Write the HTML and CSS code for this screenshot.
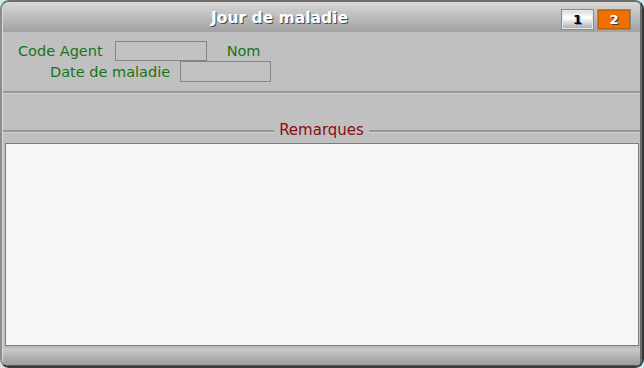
FILE: index.html
```html
<!DOCTYPE html>
<html lang="fr">
<head>
<meta charset="utf-8">
<title>Jour de maladie</title>
<link rel="stylesheet" href="styles.css">
</head>
<body>
<div class="window">
  <div class="inner">
    <div class="header">
      <div class="title">Jour de maladie</div>
      <div class="tabs">
        <div class="tab tab-off">1</div>
        <div class="tab tab-on">2</div>
      </div>
    </div>
    <div class="form">
      <div class="row row1">
        <span class="label">Code Agent</span>
        <span class="field field-code"></span>
        <span class="label label-nom">Nom</span>
      </div>
      <div class="row row2">
        <span class="label">Date de maladie</span>
        <span class="field field-date"></span>
      </div>
    </div>
    <div class="sep"></div>
    <div class="section">
      <span class="line"></span>
      <span class="section-title">Remarques</span>
      <span class="line"></span>
    </div>
    <div class="memo"></div>
    <div class="footer"></div>
  </div>
</div>
</body>
</html>
```
FILE: styles.css
```css
html, body {
  margin: 0;
  padding: 0;
}
body {
  background: #d3e9e9;
  width: 644px;
  height: 368px;
  overflow: hidden;
  font-family: "DejaVu Sans", Verdana, sans-serif;
}
.window {
  box-sizing: border-box;
  width: 644px;
  height: 368px;
  border-style: solid;
  border-width: 2px 2px 2px 2px;
  border-color: #6c6c6c #3a3a3a #3a3a3a #8c8c8c;
  border-radius: 9px;
  overflow: hidden;
  background: #c0c0c0;
}
.inner {
  box-sizing: border-box;
  height: 100%;
  display: flex;
  flex-direction: column;
  border-left: 1px solid #dadada;
  border-right: 2px solid #6a6a6a;
}
.header {
  height: 30px;
  flex: none;
  display: flex;
  align-items: flex-start;
  background: linear-gradient(to bottom, #d8d8d8 0%, #c4c4c4 35%, #a2a2a2 100%);
}
.title {
  flex: 1;
  text-align: center;
  color: #ffffff;
  font-weight: bold;
  font-size: 15.5px;
  line-height: 18px;
  padding-top: 7px;
  text-shadow: 1px 1px 0 #4a4a4a;
}
.tabs {
  display: flex;
  gap: 3px;
  padding: 7px 9px 0 5px;
}
.tab {
  box-sizing: border-box;
  width: 33px;
  height: 21px;
  font-size: 13px;
  font-weight: bold;
  line-height: 19px;
  text-align: center;
  border: 1px solid #8a8a8a;
}
.tab-off {
  color: #000000;
  background: linear-gradient(to bottom, #d8d8d8 0%, #ffffff 40%, #e4e4e4 60%, #a8a8a8 100%);
  text-shadow: 1px 1px 0 #6c8cc0;
  box-shadow: inset 0 0 0 1px #e8e8e8;
}
.tab-on {
  width: 34px;
  color: #ffffff;
  background: #ee7000;
  text-shadow: 1px 1px 0 #404040;
  box-shadow: inset 0 0 0 1px #c86000;
}
.form {
  padding-top: 9px;
  font-size: 14.5px;
  color: #167416;
}
.row {
  display: flex;
  align-items: center;
}
.row1 {
  height: 20px;
  padding-left: 15px;
}
.row2 {
  height: 21px;
  padding-left: 47px;
}
.label {
  line-height: 18px;
}
.field {
  box-sizing: border-box;
  display: block;
  border: 1px solid #858585;
  background: #c2c2c2;
  margin-left: 10px;
}
.field-code {
  width: 92px;
  height: 20px;
  margin-left: 12px;
}
.field-date {
  width: 91px;
  height: 21px;
}
.label-nom {
  margin-left: 20px;
}
.sep {
  margin-top: 9px;
  height: 2px;
  background: #979797;
  border-bottom: 1px solid #d2d2d2;
  flex: none;
}
.section {
  margin-top: 27px;
  height: 18px;
  flex: none;
  display: flex;
  align-items: center;
  gap: 5px;
}
.line {
  flex: 1;
  height: 2px;
  background: #979797;
  border-bottom: 1px solid #d2d2d2;
  margin-top: 3px;
}
.section-title {
  color: #8a0c14;
  font-size: 15px;
  line-height: 18px;
}
.memo {
  box-sizing: border-box;
  margin: 4px 1px 0 2px;
  height: 203px;
  flex: none;
  background: #f6f6f6;
  border: 1px solid #7c7c7c;
}
.footer {
  flex: 1;
  background: linear-gradient(to bottom, #b9b9b9 0%, #c8c8c8 20%, #b4b4b4 55%, #9c9c9c 100%);
  border-bottom: 1px solid #555555;
}
```
